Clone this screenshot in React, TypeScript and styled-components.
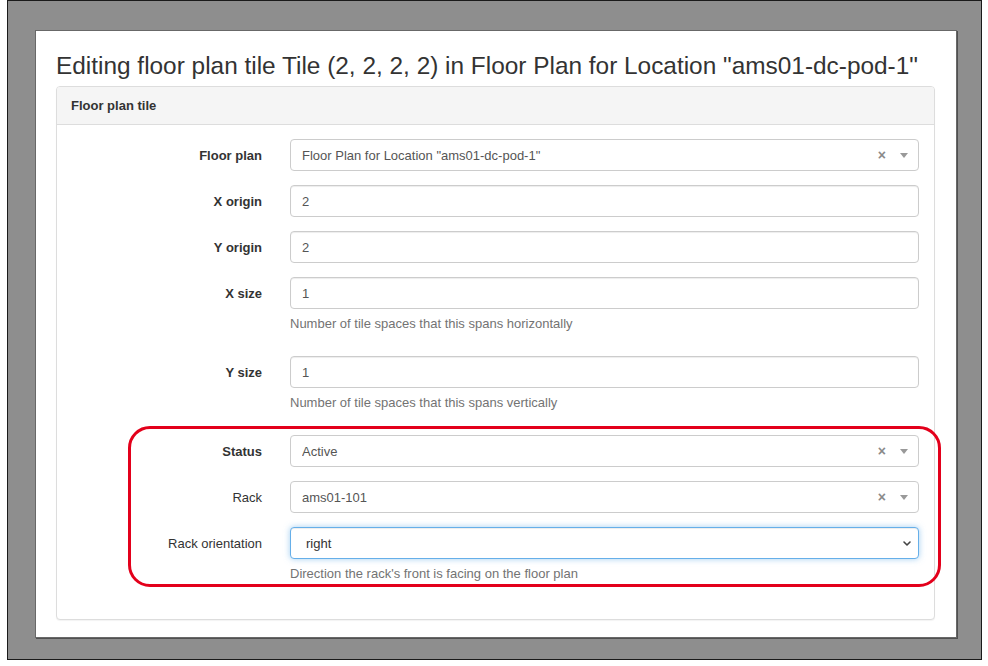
import React from 'react';
import styled, { createGlobalStyle } from 'styled-components';

const Global = createGlobalStyle`
  html, body { margin: 0; padding: 0; background: #fff; }
  body { font-family: "Liberation Sans", Arial, Helvetica, sans-serif; color: #333; }
  *, *::before, *::after { box-sizing: border-box; }
`;

const Frame = styled.div`
  margin-left: 7px;
  width: 975px;
  height: 660px;
  border: 1px solid #1a1a1a;
  background: #8e8e8e;
  padding: 29px 0 0 27px;
`;

const Page = styled.div`
  width: 922px;
  height: 608px;
  background: #fff;
  border: 1px solid #686868;
  box-shadow: 1px 1px 0 #505050;
  padding: 0 21px 0 20px;
`;

const Title = styled.h3`
  margin: 0 0 6px;
  padding-top: 21px;
  font-size: 24.4px;
  line-height: 28px;
  font-weight: 400;
  color: #333;
  white-space: nowrap;
`;

const Panel = styled.section`
  border: 1px solid #ddd;
  border-radius: 4px;
  background: #fff;
  box-shadow: 0 1px 1px rgba(0, 0, 0, 0.05);
`;

const PanelHeading = styled.div`
  background: #f5f5f5;
  border-bottom: 1px solid #ddd;
  border-radius: 3px 3px 0 0;
  padding: 10px 14px;
  font-size: 13px;
  line-height: 17px;
  font-weight: 700;
  color: #333;
`;

const PanelBody = styled.div`
  padding: 14px 15px 13px;
`;

const FormGroup = styled.div`
  display: grid;
  grid-template-columns: 190px 1fr;
  column-gap: 28px;
  margin-bottom: 14px;
`;

const Label = styled.label<{ $required?: boolean }>`
  display: flex;
  align-items: center;
  justify-content: flex-end;
  height: 32px;
  font-size: 13px;
  font-weight: ${(p) => (p.$required ? 700 : 400)};
  color: #333;
  white-space: nowrap;
`;

const Field = styled.div`
  display: flex;
  flex-direction: column;
  min-width: 0;
`;

const TextInput = styled.input`
  height: 32px;
  width: 100%;
  border: 1px solid #ccc;
  border-radius: 4px;
  padding: 0 11px;
  font-family: inherit;
  font-size: 13px;
  color: #555;
  background: #fff;
  box-shadow: inset 0 1px 1px rgba(0, 0, 0, 0.075);
  outline: none;
`;

const Select2Box = styled.div`
  height: 32px;
  border: 1px solid #ccc;
  border-radius: 4px;
  padding: 0 10px 0 11px;
  display: flex;
  align-items: center;
  font-size: 13px;
  color: #555;
  background: #fff;
`;

const SelectText = styled.span`
  flex: 1;
  white-space: nowrap;
  overflow: hidden;
`;

const Clear = styled.span`
  font-size: 14px;
  font-weight: 700;
  color: #8a8a8a;
  margin-right: 14px;
  line-height: 1;
`;

const Caret = styled.span`
  width: 0;
  height: 0;
  border-left: 4px solid transparent;
  border-right: 4px solid transparent;
  border-top: 5px solid #999;
`;

const NativeSelect = styled.div`
  height: 32px;
  border: 1px solid #66afe9;
  border-radius: 4px;
  padding: 0 6px 0 15px;
  display: flex;
  align-items: center;
  font-size: 13px;
  color: #333;
  background: #fff;
  box-shadow: inset 0 1px 1px rgba(0, 0, 0, 0.075), 0 0 6px rgba(102, 175, 233, 0.6);
`;

const Help = styled.span`
  display: block;
  margin: 6px 0 9px;
  font-size: 13px;
  line-height: 18px;
  color: #737373;
  white-space: nowrap;
`;

const Highlight = styled.div`
  position: relative;
  &::after {
    content: '';
    position: absolute;
    top: -9px;
    left: 56px;
    right: -22px;
    bottom: 5px;
    border: 3px solid #e3001b;
    border-radius: 22px;
    pointer-events: none;
  }
`;

type Select2Props = { value: string };
const Select2 = ({ value }: Select2Props) => (
  <Select2Box>
    <SelectText>{value}</SelectText>
    <Clear>×</Clear>
    <Caret />
  </Select2Box>
);

const Chevron = () => (
  <svg width="10" height="7" viewBox="0 0 10 7" aria-hidden="true">
    <path d="M2 2 L5 5 L8 2" fill="none" stroke="#444" strokeWidth="1.6" strokeLinecap="round" strokeLinejoin="round" />
  </svg>
);

export default function App() {
  return (
    <>
      <Global />
      <Frame>
        <Page>
          <Title>Editing floor plan tile Tile (2, 2, 2, 2) in Floor Plan for Location "ams01-dc-pod-1"</Title>
          <Panel>
            <PanelHeading>Floor plan tile</PanelHeading>
            <PanelBody>
              <FormGroup>
                <Label $required>Floor plan</Label>
                <Field>
                  <Select2 value={'Floor Plan for Location "ams01-dc-pod-1"'} />
                </Field>
              </FormGroup>
              <FormGroup>
                <Label $required>X origin</Label>
                <Field>
                  <TextInput readOnly value="2" />
                </Field>
              </FormGroup>
              <FormGroup>
                <Label $required>Y origin</Label>
                <Field>
                  <TextInput readOnly value="2" />
                </Field>
              </FormGroup>
              <FormGroup>
                <Label $required>X size</Label>
                <Field>
                  <TextInput readOnly value="1" />
                  <Help>Number of tile spaces that this spans horizontally</Help>
                </Field>
              </FormGroup>
              <FormGroup>
                <Label $required>Y size</Label>
                <Field>
                  <TextInput readOnly value="1" />
                  <Help>Number of tile spaces that this spans vertically</Help>
                </Field>
              </FormGroup>
              <Highlight>
                <FormGroup>
                  <Label $required>Status</Label>
                  <Field>
                    <Select2 value="Active" />
                  </Field>
                </FormGroup>
                <FormGroup>
                  <Label>Rack</Label>
                  <Field>
                    <Select2 value="ams01-101" />
                  </Field>
                </FormGroup>
                <FormGroup>
                  <Label>Rack orientation</Label>
                  <Field>
                    <NativeSelect>
                      <SelectText>right</SelectText>
                      <Chevron />
                    </NativeSelect>
                    <Help>Direction the rack's front is facing on the floor plan</Help>
                  </Field>
                </FormGroup>
              </Highlight>
            </PanelBody>
          </Panel>
        </Page>
      </Frame>
    </>
  );
}
